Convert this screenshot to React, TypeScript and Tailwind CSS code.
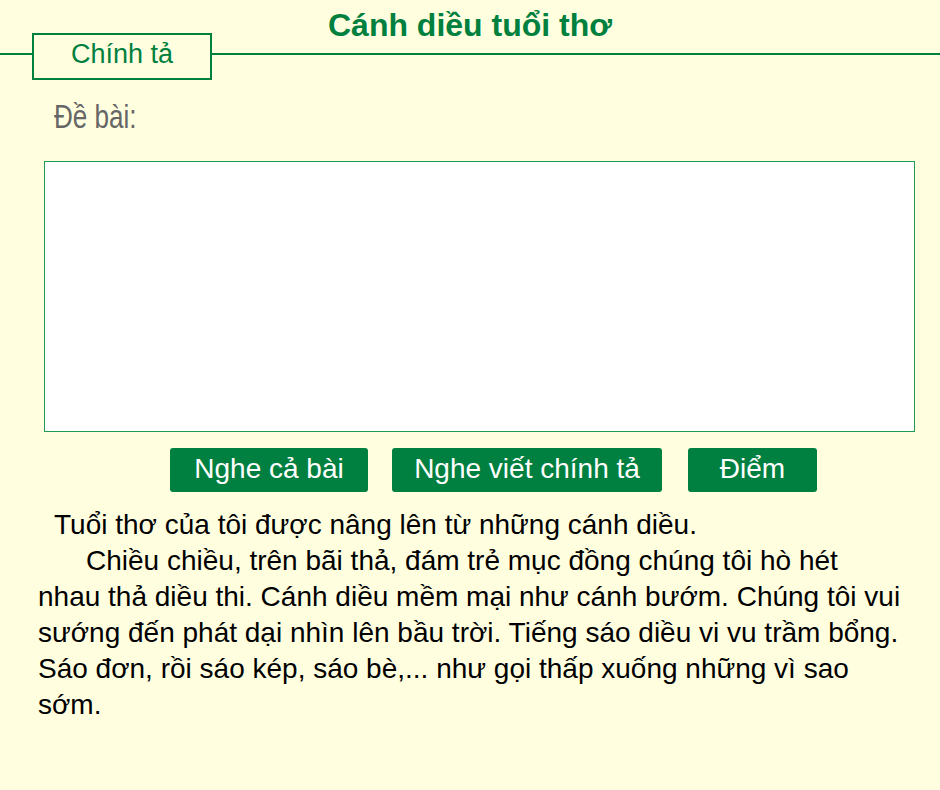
export default function App() {
  const font = { fontFamily: '"Liberation Sans", Arial, sans-serif' };
  return (
    <div className="w-[940px] h-[790px] bg-[#ffffe0] overflow-hidden" style={font}>
      <div className="relative h-[80px]">
        <h1 className="text-center text-[32px] leading-[50px] font-bold text-[#00803e]">Cánh diều tuổi thơ</h1>
        <div className="absolute left-0 right-0 top-[53px] h-[2px] bg-[#00803e]" />
        <div className="absolute left-[32px] top-[33px] w-[180px] h-[47px] border-2 border-[#00803e] bg-[#ffffe0] flex items-center justify-center text-[27px] text-[#00803e] pb-[4px]">
          Chính tả
        </div>
      </div>
      <div className="pl-[54px] pt-[20px] h-[52px]">
        <span className="inline-block origin-left scale-x-[0.79] text-[33px] text-[#666666] leading-[34px]">Đề bài:</span>
      </div>
      <div className="mx-[44px] mt-[29px] w-[871px] h-[271px] bg-white border border-[#1f9a55]" />
      <div className="flex gap-[24px] pl-[170px] mt-[16px]">
        <button className="w-[198px] h-[44px] rounded-[3px] bg-[#008040] text-white text-[28px] pb-[9px]">Nghe cả bài</button>
        <button className="w-[270px] h-[44px] rounded-[3px] bg-[#008040] text-white text-[28px] pb-[9px]">Nghe viết chính tả</button>
        <button className="w-[129px] h-[44px] rounded-[3px] bg-[#008040] text-white text-[28px] pb-[9px] ml-[2px]">Điểm</button>
      </div>
      <div className="pl-[38px] w-[904px] mt-[15px] text-[28px] leading-[36px] text-black">
        <p className="indent-[16px]">Tuổi thơ của tôi được nâng lên từ những cánh diều.</p>
        <p className="indent-[48px]">Chiều chiều, trên bãi thả, đám trẻ mục đồng chúng tôi hò hét nhau thả diều thi. Cánh diều mềm mại như cánh bướm. Chúng tôi vui sướng đến phát dại nhìn lên bầu trời. Tiếng sáo diều vi vu trầm bổng. Sáo đơn, rồi sáo kép, sáo bè,... như gọi thấp xuống những vì sao sớm.</p>
      </div>
    </div>
  );
}
